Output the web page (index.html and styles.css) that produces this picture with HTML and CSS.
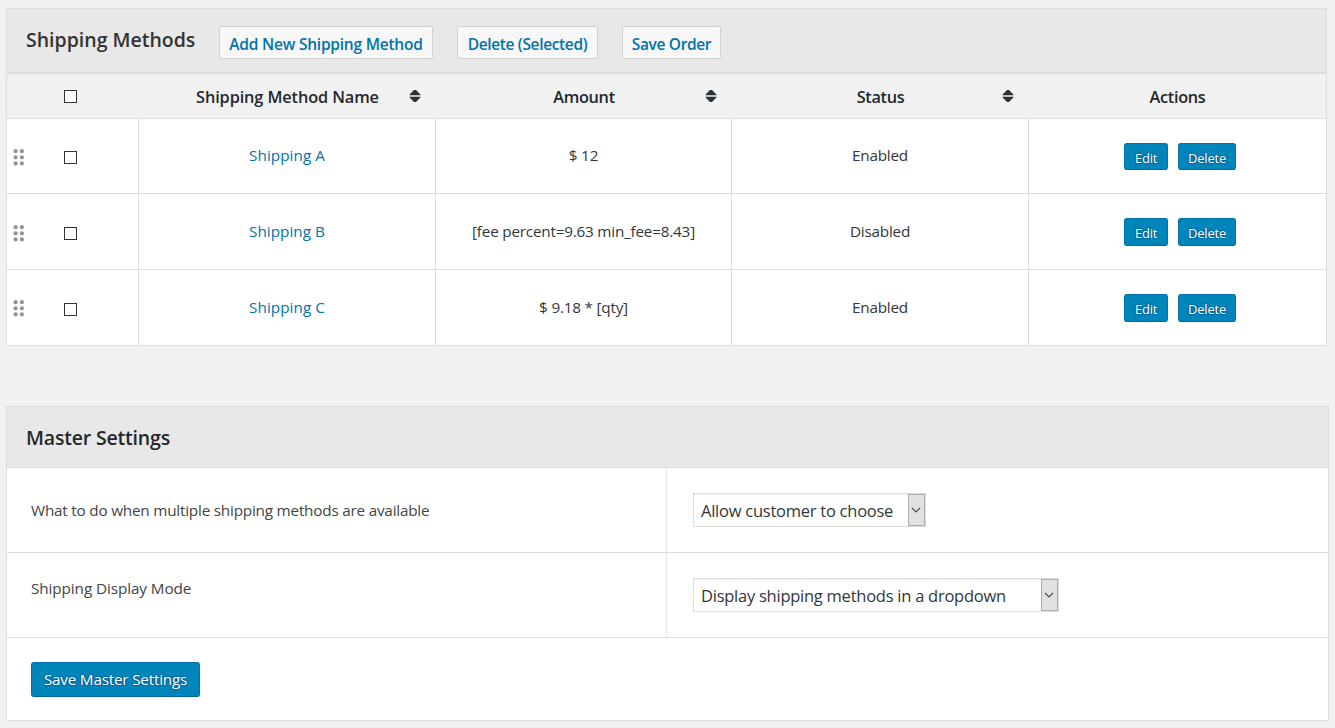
FILE: index.html
```html
<!DOCTYPE html>
<html lang="en">
<head>
<meta charset="utf-8">
<title>Shipping Methods</title>
<link rel="stylesheet" href="styles.css">
</head>
<body>
<svg class="defs" width="0" height="0" aria-hidden="true">
  <symbol id="sort" viewBox="0 0 12 12"><path d="M.6 5.2V4.6L5 0h2l4.4 4.6v.6zM.6 6.8h10.8v.6L7 12H5L.6 7.4z"/></symbol>
  <symbol id="grip" viewBox="0 0 12 18"><circle cx="2.6" cy="3.2" r="2.1"/><circle cx="8.9" cy="3.2" r="2.1"/><circle cx="2.6" cy="9.3" r="2.1"/><circle cx="8.9" cy="9.3" r="2.1"/><circle cx="2.6" cy="15.4" r="2.1"/><circle cx="8.9" cy="15.4" r="2.1"/></symbol>
  <symbol id="chevron" viewBox="0 0 10 6"><path d="M1 1l4 4 4-4"/></symbol>
</svg>

<section class="panel methods">
  <header class="panel-head">
    <h2>Shipping Methods</h2>
    <button class="btn add"><span>Add New Shipping Method</span></button>
    <button class="btn del"><span>Delete (Selected)</span></button>
    <button class="btn order"><span>Save Order</span></button>
  </header>
  <div class="row head">
    <div class="cell pick"><span class="box"></span></div>
    <div class="cell"><span class="t-name">Shipping Method Name</span><svg class="sort"><use href="#sort"/></svg></div>
    <div class="cell"><span class="t-amount">Amount</span><svg class="sort"><use href="#sort"/></svg></div>
    <div class="cell"><span class="t-status">Status</span><svg class="sort"><use href="#sort"/></svg></div>
    <div class="cell"><span class="t-actions">Actions</span></div>
  </div>
  <div class="row first">
    <div class="cell pick"><svg class="grip"><use href="#grip"/></svg><span class="box"></span></div>
    <div class="cell"><a>Shipping A</a></div>
    <div class="cell"><span>$ 12</span></div>
    <div class="cell"><span>Enabled</span></div>
    <div class="cell actions"><button class="mini edit">Edit</button><button class="mini remove">Delete</button></div>
  </div>
  <div class="row second">
    <div class="cell pick"><svg class="grip"><use href="#grip"/></svg><span class="box"></span></div>
    <div class="cell"><a>Shipping B</a></div>
    <div class="cell"><span class="fee">[fee percent=9.63 min_fee=8.43]</span></div>
    <div class="cell"><span>Disabled</span></div>
    <div class="cell actions"><button class="mini edit">Edit</button><button class="mini remove">Delete</button></div>
  </div>
  <div class="row">
    <div class="cell pick"><svg class="grip"><use href="#grip"/></svg><span class="box"></span></div>
    <div class="cell"><a>Shipping C</a></div>
    <div class="cell"><span>$ 9.18 * [qty]</span></div>
    <div class="cell"><span>Enabled</span></div>
    <div class="cell actions"><button class="mini edit">Edit</button><button class="mini remove">Delete</button></div>
  </div>
</section>

<section class="panel master">
  <header class="panel-head"><h2>Master Settings</h2></header>
  <div class="setting">
    <div class="label"><span>What to do when multiple shipping methods are available</span></div>
    <div class="control"><div class="select choose"><span>Allow customer to choose</span><i><svg class="chev"><use href="#chevron"/></svg></i></div></div>
  </div>
  <div class="setting display">
    <div class="label"><span>Shipping Display Mode</span></div>
    <div class="control"><div class="select mode"><span>Display shipping methods in a dropdown</span><i><svg class="chev"><use href="#chevron"/></svg></i></div></div>
  </div>
  <div class="save"><button>Save Master Settings</button></div>
</section>
</body>
</html>
```
FILE: styles.css
```css
* { box-sizing: border-box; }
body {
  margin: 0;
  padding: 8px 6px 0;
  height: 728px;
  overflow: hidden;
  background: #f1f1f1;
  color: #32373c;
  font: 15.3px/20px "Open Sans", "Noto Sans", sans-serif;
  letter-spacing: -0.22px;
}
.defs { position: absolute; }
button { font: inherit; letter-spacing: inherit; margin: 0; padding: 0; white-space: nowrap; }
span, a { white-space: nowrap; }

.panel { border: 1px solid #ddd; background: #fff; }
.methods { width: 1321px; }
.master { width: 1323px; margin-top: 60px; }
.panel-head { display: flex; background: #e8e8e8; border-bottom: 1px solid #ddd; }
.panel-head h2 { margin: 0; font-size: 19.5px; line-height: 26px; font-weight: 600; color: #333; letter-spacing: 0; white-space: nowrap; }
.methods .panel-head { height: 65px; border-bottom-width: 2px; padding: 17px 0 0 19px; }
.methods h2 { width: 193px; margin-top: 1px; }
.master .panel-head { height: 61px; padding: 18px 0 0 19px; }
.master h2 { color: #23282d; letter-spacing: -0.18px; }

.btn {
  height: 33px;
  border: 1px solid #d2d2d2;
  border-radius: 2px;
  background: #f7f7f7;
  color: #0073aa;
  font-size: 15.5px;
  font-weight: 600;
  line-height: 31px;
  padding-top: 2px;
  letter-spacing: -0.35px;
}
.add { width: 214px; margin-right: 24px; letter-spacing: -0.22px; }
.del { width: 141px; margin-right: 24px; }
.order { width: 99px; }

.row { display: grid; grid-template-columns: 132px 297px 296px 297px 297px; height: 76px; border-bottom: 1px solid #ddd; }
.row.first { height: 75px; }
.row:last-child { height: 75px; border-bottom: 0; }
.cell { position: relative; display: flex; align-items: center; justify-content: center; border-right: 1px solid #ddd; padding-bottom: 2px; }
.cell:last-child { border-right: 0; }
.head { height: 45px; background: #f1f1f1; color: #23282d; font-size: 16.3px; font-weight: 600; letter-spacing: -0.3px; }
.t-name { letter-spacing: -0.1px; }
.head .cell { border-right: 0; padding: 2px 0 0 0; }
.cell a { color: #0073aa; letter-spacing: 0.03px; }
.sort { position: absolute; right: 15px; top: 16px; width: 12px; height: 12px; fill: #2c3338; }
.cell.pick { justify-content: flex-start; padding: 3px 0 0 57px; }
.first .cell.pick { padding-top: 2px; }
.head .cell.pick { padding: 1px 0 0 57px; }
.box { width: 13px; height: 13px; border: 1px solid #333; background: #fff; }
.grip { position: absolute; left: 6px; top: 29px; width: 12px; height: 18px; fill: #93939b; }
.second .grip { top: 29.5px; }
.actions { padding: 0 0 0 5px; gap: 10px; }
.mini {
  height: 28px;
  border: 1px solid #0073aa;
  border-bottom-color: #006799;
  border-radius: 3px;
  background: #0085ba;
  color: #fff;
  font-size: 13px;
  line-height: 29px;
  text-shadow: 0 -1px 1px #006799, 1px 0 1px #006799, 0 1px 1px #006799, -1px 0 1px #006799;
}
.first .mini { height: 27px; }
.first .cell.actions { padding-top: 1px; }
.edit { width: 44px; }
.remove { width: 58px; }

.setting { display: grid; grid-template-columns: 660px 1fr; height: 85px; border-bottom: 1px solid #ddd; }
.label { padding: 32px 0 0 24px; border-right: 1px solid #e8e8e8; color: #444; }
.display .label { padding-top: 25px; letter-spacing: -0.1px; }
.control { padding: 25px 0 0 26px; }
.select {
  display: flex;
  justify-content: space-between;
  height: 34px;
  border: 1px solid #ddd;
  padding-left: 7px;
  box-shadow: inset 0 1px 2px rgba(0, 0, 0, 0.07);
  font-size: 16.5px;
  line-height: 34px;
  letter-spacing: -0.25px;
}
.choose { width: 233px; }
.mode { width: 366px; }
.select i { display: flex; align-items: center; justify-content: center; width: 17px; height: 32px; border: 1px solid #adadad; background: #e1e1e1; }
.chev { flex: none; width: 10px; height: 6px; margin-right: 1px; fill: none; stroke: #505050; stroke-width: 1.2; }
.save { height: 82px; padding: 24px; }
.save button {
  width: 169px;
  height: 35px;
  border: 1px solid #0073aa;
  border-bottom-color: #006799;
  border-radius: 3px;
  background: #0085ba;
  color: #fff;
  line-height: 33px;
  text-shadow: 0 -1px 1px #006799, 1px 0 1px #006799, 0 1px 1px #006799, -1px 0 1px #006799;
}
```
